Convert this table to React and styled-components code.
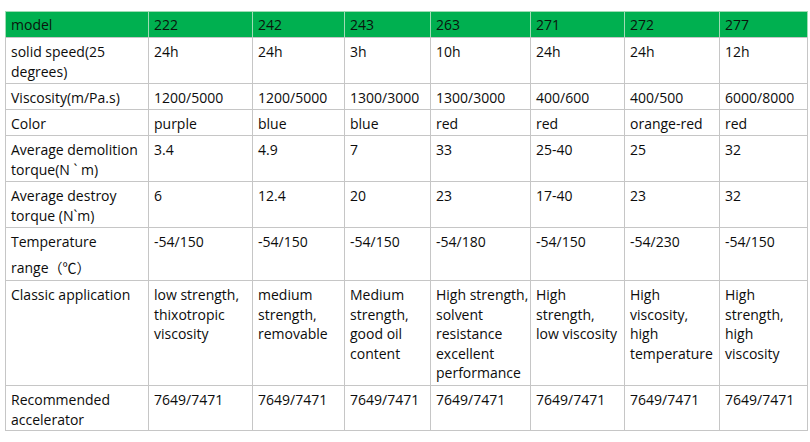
import React from 'react';
import styled, { createGlobalStyle } from 'styled-components';

const GlobalStyle = createGlobalStyle`
  html, body {
    margin: 0;
    padding: 0;
    background: #ffffff;
  }
  body {
    font-family: "Open Sans", "Noto Sans CJK SC", sans-serif;
  }
`;

const Page = styled.div`
  padding: 11px 0 0 5px;
  width: 810px;
  height: 442px;
  box-sizing: border-box;
  overflow: hidden;
`;

const Table = styled.table`
  border-collapse: collapse;
  table-layout: fixed;
  width: 802px;
  font-size: 14px;
  line-height: 19.5px;
  color: #0c0c0c;
`;

const Row = styled.tr`
  height: ${(p) => p.$h}px;
`;

const HeadCell = styled.th`
  background: #00b050;
  color: #0a140c;
  font-weight: 400;
  text-align: left;
  vertical-align: top;
  padding: 3px 4px 0 5px;
  border: 1px solid #9fdcb4;
  border-bottom-color: #c6c6c6;
  white-space: nowrap;
`;

const Cell = styled.td`
  vertical-align: top;
  padding: 4px 4px 0 5px;
  border: 1px solid #c6c6c6;
  white-space: nowrap;
`;

const Line = styled.span`
  display: block;
  margin-top: ${(p) => p.$gap || 0}px;
`;

const widths = [143, 104, 92, 86, 100, 94, 95, 88];

const header = ['model', '222', '242', '243', '263', '271', '272', '277'];

const rows = [
  { h: 46, cells: [['solid speed(25', 'degrees)'], ['24h'], ['24h'], ['3h'], ['10h'], ['24h'], ['24h'], ['12h']] },
  { h: 26, cells: [['Viscosity(m/Pa.s)'], ['1200/5000'], ['1200/5000'], ['1300/3000'], ['1300/3000'], ['400/600'], ['400/500'], ['6000/8000']] },
  { h: 26, cells: [['Color'], ['purple'], ['blue'], ['blue'], ['red'], ['red'], ['orange-red'], ['red']] },
  { h: 46, cells: [['Average demolition', 'torque(N ` m)'], ['3.4'], ['4.9'], ['7'], ['33'], ['25-40'], ['25'], ['32']] },
  { h: 46, cells: [['Average destroy', 'torque (N`m)'], ['6'], ['12.4'], ['20'], ['23'], ['17-40'], ['23'], ['32']] },
  { h: 53, gap: 6, cells: [['Temperature', 'range（℃）'], ['-54/150'], ['-54/150'], ['-54/150'], ['-54/180'], ['-54/150'], ['-54/230'], ['-54/150']] },
  {
    h: 105,
    cells: [
      ['Classic application'],
      ['low strength,', 'thixotropic', 'viscosity'],
      ['medium', 'strength,', 'removable'],
      ['Medium', 'strength,', 'good oil', 'content'],
      ['High strength,', 'solvent', 'resistance', 'excellent', 'performance'],
      ['High', 'strength,', 'low viscosity'],
      ['High', 'viscosity,', 'high', 'temperature'],
      ['High', 'strength,', 'high', 'viscosity'],
    ],
  },
  { h: 45, cells: [['Recommended', 'accelerator'], ['7649/7471'], ['7649/7471'], ['7649/7471'], ['7649/7471'], ['7649/7471'], ['7649/7471'], ['7649/7471']] },
];

const App = () => {
  return (
    <Page>
      <GlobalStyle />
      <Table>
        <colgroup>
          {widths.map((w, i) => (
            <col key={i} style={{ width: `${w}px` }} />
          ))}
        </colgroup>
        <thead>
          <Row $h={26}>
            {header.map((h) => (
              <HeadCell key={h}>{h}</HeadCell>
            ))}
          </Row>
        </thead>
        <tbody>
          {rows.map((row, r) => (
            <Row key={r} $h={row.h}>
              {row.cells.map((lines, c) => (
                <Cell key={c}>
                  {lines.map((text, i) => (
                    <Line key={i} $gap={i > 0 && row.gap ? row.gap : 0}>
                      {text}
                    </Line>
                  ))}
                </Cell>
              ))}
            </Row>
          ))}
        </tbody>
      </Table>
    </Page>
  );
};

export default App;
